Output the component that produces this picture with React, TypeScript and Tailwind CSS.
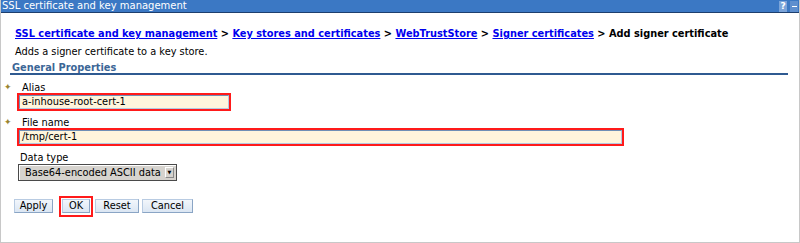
export default function App() {
  const font = { fontFamily: '"DejaVu Sans", sans-serif' };
  const field =
    'h-[14px] border border-t-[#6f8fb6] border-l-[#6f8fb6] border-b-[#b5c9e0] border-r-[#b5c9e0] bg-[#fff5dc] pl-[2px] leading-[12px] whitespace-nowrap';
  const btn =
    'h-[14px] border border-[#8aa5c5] border-t-[#b8cbe2] border-l-[#b8cbe2] bg-gradient-to-b from-[#f2f6fb] to-[#dbe6f3] text-center text-[9.8px] leading-[12px] text-black';
  return (
    <div className="h-[243px] w-[800px] overflow-hidden bg-white text-[9.8px] text-black" style={font}>
      <div className="flex h-[243px] flex-col border-x border-b border-[#c8c8c8]">
        {/* title bar */}
        <div className="flex h-[13px] shrink-0 items-center justify-between border-b border-[#1d3f6e] bg-[#3b78c4] pl-px text-[10px] leading-[12px] text-white">
          <span>SSL certificate and key management</span>
          <div className="flex h-full items-center gap-[3px] pr-px">
            <span className="flex h-[11px] w-[8px] items-center justify-center bg-[#7ba4d9] text-[9px] font-bold leading-none">?</span>
            <span className="flex h-[11px] w-[8px] items-center justify-center bg-[#5f8fce]">
              <span className="h-px w-[5px] bg-white" />
            </span>
          </div>
        </div>

        <div className="flex flex-col pl-[14px] pt-[15px]">
          <div className="whitespace-nowrap font-bold leading-[12px]">
            <a className="text-[#0000ee] underline">SSL certificate and key management</a> &gt;{' '}
            <a className="text-[#0000ee] underline">Key stores and certificates</a> &gt;{' '}
            <a className="text-[#0000ee] underline">WebTrustStore</a> &gt;{' '}
            <a className="text-[#0000ee] underline">Signer certificates</a> &gt; Add signer certificate
          </div>
          <div className="mt-[6px] leading-[12px]">Adds a signer certificate to a key store.</div>
        </div>

        <div className="ml-[9px] mr-[11px] mt-[4px] border-b-2 border-[#2f5a91] pl-[2px] font-bold leading-[11px] text-[#3b6696]">
          General Properties
        </div>

        <div className="flex flex-col pl-[3px] pt-[7px]">
          <div className="flex items-end leading-[11px]">
            <span className="mb-[1px] w-[18px] text-[9px] leading-[9px] text-[#9a8530]">✦</span>
            <span>Alias</span>
          </div>
          <div className="ml-[13px] w-[214px] border-2 border-[#ff1a1a]">
            <div className={field}>a-inhouse-root-cert-1</div>
          </div>

          <div className="mt-[6px] flex items-end leading-[11px]">
            <span className="mb-[1px] w-[18px] text-[9px] leading-[9px] text-[#9a8530]">✦</span>
            <span>File name</span>
          </div>
          <div className="ml-[13px] w-[607px] border-2 border-[#ff1a1a]">
            <div className={field}>/tmp/cert-1</div>
          </div>

          <div className="ml-[16px] mt-[6px] leading-[12px]">Data type</div>
          <div className="ml-[14px] flex h-[17px] w-[159px] items-center border border-[#4a4a4a] bg-[#d6d3ce] shadow-[inset_1px_1px_0_#ffffff]">
            <span className="flex-1 whitespace-nowrap pl-[6px] leading-[12px]">Base64-encoded ASCII data</span>
            <span className="mr-[2px] flex h-[11px] w-[9px] items-center justify-center border border-b-[#8a8a8a] border-l-white border-r-[#8a8a8a] border-t-white text-[5px] leading-none">▼</span>
          </div>

          <div className="ml-[10px] mt-[15px] flex items-center">
            <button className={`w-[39px] ${btn}`}>Apply</button>
            <div className="ml-[6px] border-2 border-[#ff1a1a] p-px">
              <button className={`w-[28px] ${btn}`}>OK</button>
            </div>
            <button className={`ml-[2px] w-[44px] ${btn}`}>Reset</button>
            <button className={`ml-[3px] w-[51px] ${btn}`}>Cancel</button>
          </div>
        </div>
      </div>
    </div>
  );
}
